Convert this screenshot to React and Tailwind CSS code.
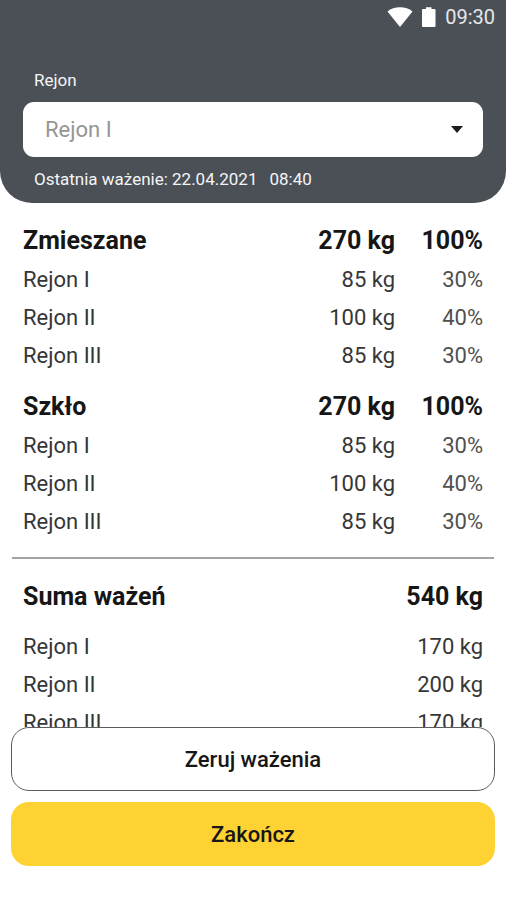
const fractions = [
  {
    name: "Zmieszane",
    total: "270 kg",
    share: "100%",
    rows: [
      ["Rejon I", "85 kg", "30%"],
      ["Rejon II", "100 kg", "40%"],
      ["Rejon III", "85 kg", "30%"],
    ],
  },
  {
    name: "Szkło",
    total: "270 kg",
    share: "100%",
    rows: [
      ["Rejon I", "85 kg", "30%"],
      ["Rejon II", "100 kg", "40%"],
      ["Rejon III", "85 kg", "30%"],
    ],
  },
];

const sums = [
  ["Rejon I", "170 kg"],
  ["Rejon II", "200 kg"],
  ["Rejon III", "170 kg"],
];

function StatusBar() {
  return (
    <div className="flex h-[34px] items-center justify-end gap-2 pr-[11px] text-[20px] leading-8 text-[#e6e8ea]">
      <svg className="h-5 w-[26px]" viewBox="0 0 26 20" fill="#fff" aria-hidden="true">
        <path d="M.5 4.500C4 1.500 8 .3 13 .3s9 1.200 12.500 4.200L13 20z" />
      </svg>
      <svg className="h-5 w-4" viewBox="0 0 16 20" fill="#fff" aria-hidden="true">
        <path d="M5 .3h5.500V2h3q1 0 1 1v16q0 1-1 1H2q-1 0-1-1V3q0-1 1-1h3z" />
      </svg>
      <span>09:30</span>
    </div>
  );
}

function Header() {
  return (
    <header className="shrink-0 rounded-b-[32px] bg-[#4b5057] pb-3 text-[#f4f5f6]">
      <StatusBar />
      <div className="px-[23px] pt-[34px]">
        <label htmlFor="region" className="block px-[11px] text-[17px] leading-6">
          Rejon
        </label>
        <div className="relative mt-2.5 mb-2.5">
          <select
            id="region"
            className="block h-[55px] w-full appearance-none rounded-[11px] bg-white px-[22px] text-[22px] text-[#959595]"
          >
            <option>Rejon I</option>
            <option>Rejon II</option>
            <option>Rejon III</option>
          </select>
          <svg
            className="pointer-events-none absolute right-5 top-6 h-[7px] w-3"
            viewBox="0 0 12 7"
            fill="#1c1c1c"
            aria-hidden="true"
          >
            <path d="M0 0h12L6 7z" />
          </svg>
        </div>
        <p className="flex gap-3 px-[11px] text-[17px] leading-6">
          <span>Ostatnia ważenie: 22.04.2021</span>
          <span>08:40</span>
        </p>
      </div>
    </header>
  );
}

function FractionTable({ fraction }) {
  return (
    <table className="w-full text-right">
      <thead>
        <tr className="h-10 text-[25px] leading-8 font-semibold">
          <th scope="col" className="p-0 text-left">{fraction.name}</th>
          <th scope="col" className="w-24 p-0">{fraction.total}</th>
          <th scope="col" className="w-[88px] p-0">{fraction.share}</th>
        </tr>
      </thead>
      <tbody>
        {fraction.rows.map(([name, weight, share]) => (
          <tr key={name} className="h-[38px] text-[22px] leading-8 text-[#363636]">
            <th scope="row" className="p-0 text-left font-normal">{name}</th>
            <td className="p-0">{weight}</td>
            <td className="p-0 text-[#505050]">{share}</td>
          </tr>
        ))}
      </tbody>
    </table>
  );
}

export default function App() {
  return (
    <div className="flex h-screen flex-col bg-white font-['Roboto',sans-serif] text-[#161616]">
      <Header />
      <main className="min-h-0 flex-1 overflow-hidden px-3 pt-[18px]">
        <div className="flex flex-col gap-3 px-[11px]">
          {fractions.map((fraction) => (
            <FractionTable key={fraction.name} fraction={fraction} />
          ))}
        </div>
        <hr className="mt-4 mb-[18px] border-t-2 border-[#a3a3a3]" />
        <div className="px-[11px]">
          <table className="w-full text-right">
            <thead>
              <tr className="h-[51px] align-top text-[25px] leading-10 font-semibold">
                <th scope="col" className="p-0 text-left">Suma ważeń</th>
                <th scope="col" className="p-0">540 kg</th>
              </tr>
            </thead>
            <tbody>
              {sums.map(([name, weight]) => (
                <tr key={name} className="h-[38px] text-[22px] leading-8 text-[#363636]">
                  <th scope="row" className="p-0 text-left font-normal">{name}</th>
                  <td className="p-0">{weight}</td>
                </tr>
              ))}
            </tbody>
          </table>
        </div>
      </main>
      <footer className="flex shrink-0 flex-col gap-[11px] px-[11px] pb-[34px] text-[22px] font-medium">
        <button type="button" className="h-16 rounded-[18px] border border-[#5c5c5c] bg-white">
          Zeruj ważenia
        </button>
        <button type="button" className="h-16 rounded-[18px] bg-[#ffd233]">
          Zakończ
        </button>
      </footer>
    </div>
  );
}
